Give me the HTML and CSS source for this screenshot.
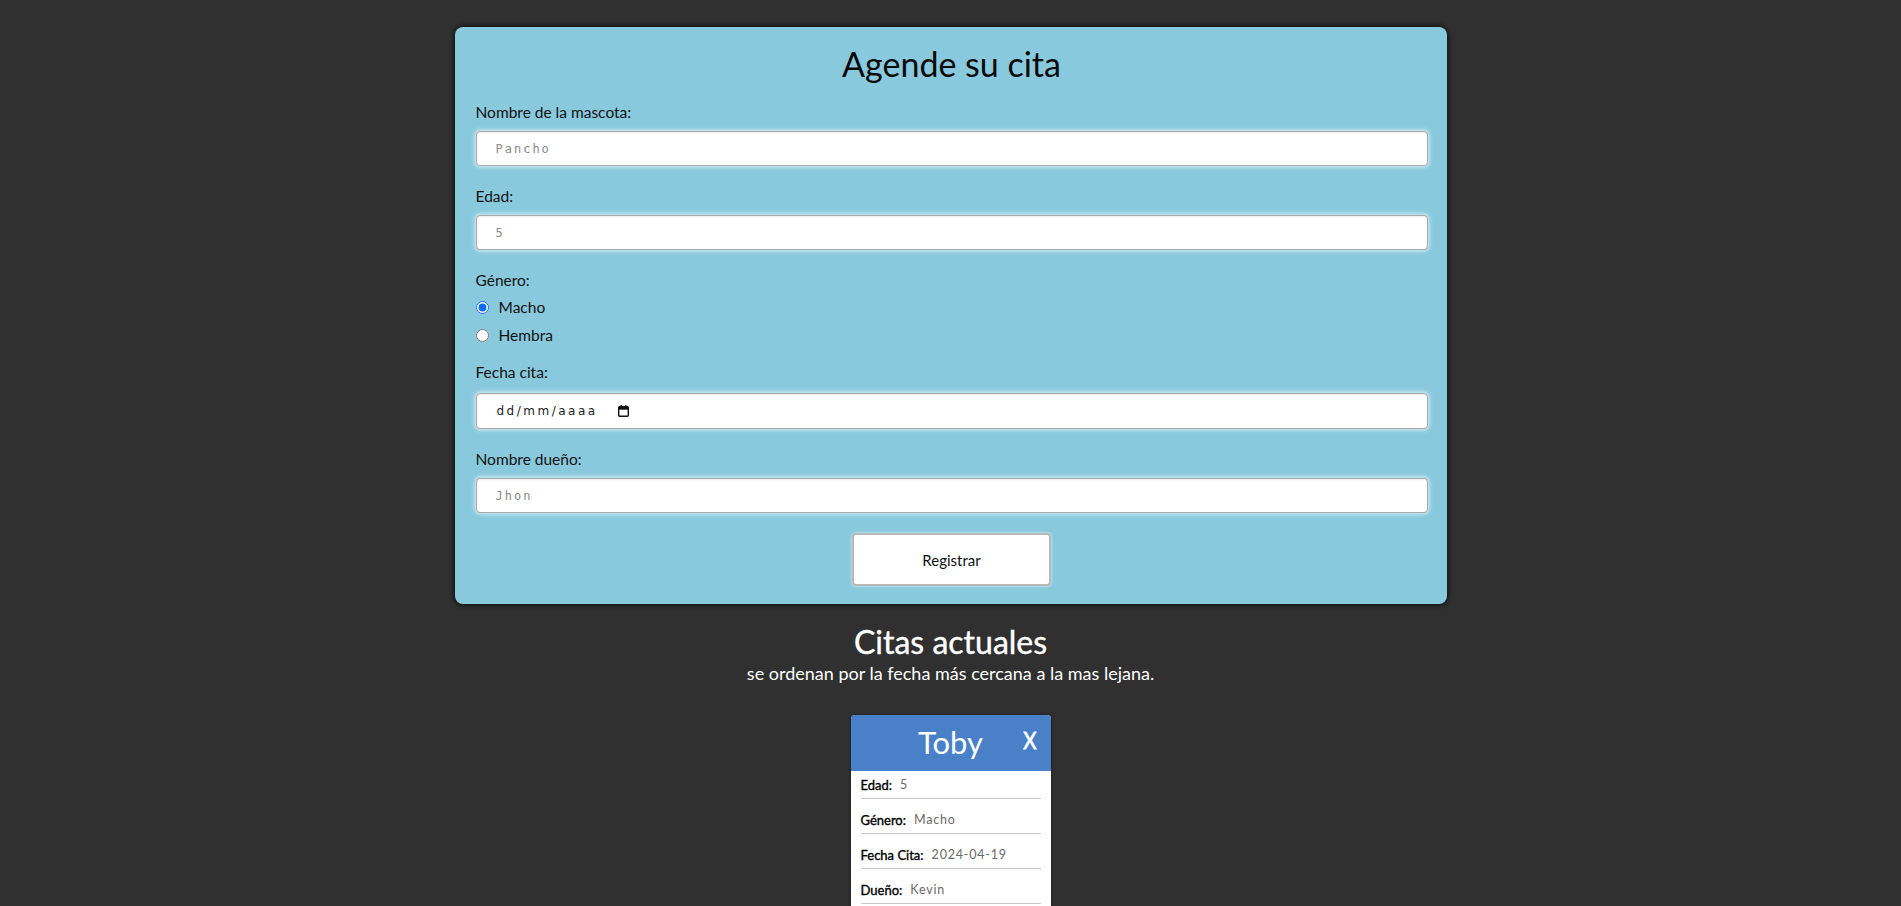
FILE: index.html
```html
<!DOCTYPE html>
<html lang="es">
<head>
<meta charset="utf-8">
<title>Citas</title>
<link rel="stylesheet" href="styles.css">
</head>
<body>
<form class="form-card">
  <h1 class="form-title">Agende su cita</h1>
  <div class="field">
    <label class="field-label">Nombre de la mascota:</label>
    <input class="field-input" type="text" placeholder="Pancho">
  </div>
  <div class="field">
    <label class="field-label">Edad:</label>
    <input class="field-input" type="text" placeholder="5">
  </div>
  <div class="field field-radio">
    <label class="field-label">Género:</label>
    <label class="radio-row"><input type="radio" name="genero" checked><span>Macho</span></label>
    <label class="radio-row"><input type="radio" name="genero"><span>Hembra</span></label>
  </div>
  <div class="field">
    <label class="field-label field-label-date">Fecha cita:</label>
    <div class="field-input date-input">
      <span class="date-text">dd/mm/aaaa</span>
      <svg class="cal-icon" width="11" height="12" viewBox="0 0 11 12"><rect x="0.7" y="1.7" width="9.6" height="9.6" rx="1" fill="none" stroke="#111" stroke-width="1.4"/><rect x="0.7" y="1.7" width="9.6" height="3" fill="#111"/><rect x="2.5" y="0" width="1.4" height="2.5" fill="#111"/><rect x="7.1" y="0" width="1.4" height="2.5" fill="#111"/></svg>
    </div>
  </div>
  <div class="field">
    <label class="field-label">Nombre dueño:</label>
    <input class="field-input" type="text" placeholder="Jhon">
  </div>
  <div class="actions">
    <button class="btn-submit" type="button">Registrar</button>
  </div>
</form>

<section class="list">
  <h2 class="list-title">Citas actuales</h2>
  <p class="list-sub">se ordenan por la fecha más cercana a la mas lejana.</p>
  <div class="cita-card">
    <div class="cita-head">
      <span class="cita-name">Toby</span>
      <span class="cita-close">X</span>
    </div>
    <div class="cita-body">
      <div class="cita-row"><span class="cita-label">Edad:</span><span class="cita-value">5</span></div>
      <div class="cita-row"><span class="cita-label">Género:</span><span class="cita-value">Macho</span></div>
      <div class="cita-row"><span class="cita-label">Fecha Cita:</span><span class="cita-value">2024-04-19</span></div>
      <div class="cita-row"><span class="cita-label">Dueño:</span><span class="cita-value">Kevin</span></div>
    </div>
  </div>
</section>
</body>
</html>
```
FILE: styles.css
```css
* { box-sizing: border-box; }

body {
  margin: 0;
  background: #303030;
  font-family: "Lato", "Open Sans", sans-serif;
  color: #111;
}

.form-card {
  width: 992px;
  margin: 27px auto 0;
  background: #89c9dd;
  border-radius: 8px;
  box-shadow: 0 0 5px 1px rgba(0, 0, 0, 0.75);
  padding: 17px 19px 18px 21px;
}

.form-title {
  margin: 0 0 18px;
  font-size: 34px;
  line-height: 40px;
  font-weight: 400;
  text-align: center;
  color: #0a0a0a;
}

.field {
  display: flex;
  flex-direction: column;
  margin-bottom: 20px;
}

.field-label {
  font-size: 15.5px;
  line-height: 20px;
  margin-bottom: 9px;
  color: #111;
}

.field-label-date { margin-bottom: 11px; }

.field-input {
  height: 35px;
  width: 100%;
  border: 1px solid #a9a9a9;
  border-radius: 4px;
  background: #fff;
  box-shadow: 0 0 4px 1px rgba(230, 245, 250, 0.9), inset 0 1px 2px rgba(0,0,0,0.08);
  padding: 0 19px;
  font-family: "DejaVu Sans Mono", "Liberation Mono", monospace;
  font-size: 12px;
  letter-spacing: 2px;
  color: #333;
  outline: none;
}

.field-input::placeholder {
  color: #8a8a8a;
}

.field-radio {
  margin-bottom: 15px;
}

.field-radio .field-label { margin-bottom: 5px; }

.radio-row {
  display: flex;
  align-items: center;
  height: 24px;
  margin-bottom: 4px;
  font-size: 15.5px;
  color: #111;
}

.radio-row:last-child { margin-bottom: 0; }

.radio-row input {
  width: 13px;
  height: 13px;
  margin: 0 10px 0 0;
  accent-color: #0a6cf5;
}

.date-input {
  height: 36px;
  display: flex;
  align-items: center;
  padding-left: 20px;
  font-family: "DejaVu Sans", "Liberation Sans", sans-serif;
  font-size: 12px;
  letter-spacing: 2.5px;
  color: #222;
}

.date-text { margin-right: 20px; }

.cal-icon { display: block; }

.actions {
  display: flex;
  justify-content: center;
  margin-top: 1px;
}

.btn-submit {
  width: 199px;
  height: 53px;
  background: #fff;
  border: 2px solid #b8b8b8;
  border-radius: 4px;
  box-shadow: 0 0 3px rgba(255,255,255,0.8);
  font-family: "Lato", "Open Sans", sans-serif;
  font-size: 15px;
  color: #111;
  cursor: pointer;
}

.list {
  display: flex;
  flex-direction: column;
  align-items: center;
  color: #fff;
}

.list-title {
  margin: 20px 0 0;
  font-size: 32px;
  line-height: 36px;
  font-weight: 400;
  -webkit-text-stroke: 0.4px #fff;
}

.list-sub {
  margin: 3px 0 0;
  font-size: 18px;
  line-height: 20px;
}

.cita-card {
  width: 200px;
  margin-top: 32px;
  background: #fff;
  border-radius: 4px;
  overflow: hidden;
  box-shadow: 0 0 3px rgba(0,0,0,0.6);
}

.cita-head {
  position: relative;
  height: 56px;
  background: #4a80c8;
  display: flex;
  align-items: center;
  justify-content: center;
}

.cita-name {
  font-size: 31px;
  line-height: 36px;
  color: #fff;
  margin-bottom: 3px;
}

.cita-close {
  position: absolute;
  right: 13px;
  top: 10px;
  font-size: 24px;
  line-height: 30px;
  color: #fff;
  -webkit-text-stroke: 0.8px #fff;
  transform: scaleX(0.85);
}

.cita-body {
  padding: 0 10px 10px;
  color: #111;
}

.cita-row {
  display: flex;
  align-items: center;
  gap: 8px;
  height: 28px;
  margin-bottom: 7px;
  border-bottom: 1px solid #c8c8c8;
}

.cita-label {
  font-size: 13px;
  font-weight: 400;
  color: #000;
  -webkit-text-stroke: 0.35px #000;
}

.cita-value {
  font-size: 12.5px;
  letter-spacing: 0.8px;
  color: #6a6a6a;
}
```
